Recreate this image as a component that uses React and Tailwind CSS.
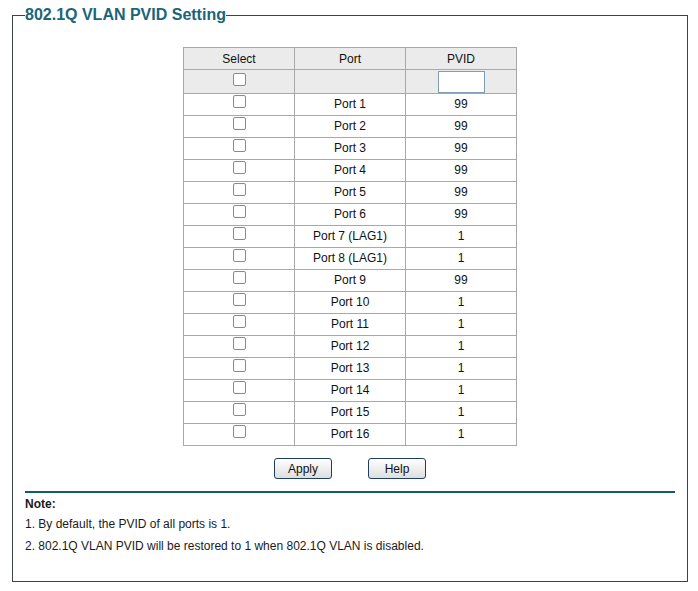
import React from "react";

const ports = [
  ["Port 1", "99"],
  ["Port 2", "99"],
  ["Port 3", "99"],
  ["Port 4", "99"],
  ["Port 5", "99"],
  ["Port 6", "99"],
  ["Port 7 (LAG1)", "1"],
  ["Port 8 (LAG1)", "1"],
  ["Port 9", "99"],
  ["Port 10", "1"],
  ["Port 11", "1"],
  ["Port 12", "1"],
  ["Port 13", "1"],
  ["Port 14", "1"],
  ["Port 15", "1"],
  ["Port 16", "1"],
];

function Box() {
  return (
    <span className="block w-[13px] h-[13px] border border-[#8a8a8a] rounded-[2px] bg-white"></span>
  );
}

export default function App() {
  return (
    <div
      className="pt-[6px] pl-[12px] w-[688px] bg-white text-[#111]"
      style={{ fontFamily: '"Liberation Sans", Arial, sans-serif' }}
    >
      <fieldset className="border border-[#3d4347] px-[12px] pb-[24px] w-[676px]">
        <legend className="text-[16px] font-bold leading-[18px] text-[#1b6479]">
          802.1Q VLAN PVID Setting
        </legend>
        <table className="mx-auto mt-[23px] border-collapse table-fixed w-[334px] text-[12px] leading-[14px]">
          <tbody>
            <tr className="h-[22px] bg-[#ebebeb]">
              <td className="border border-[#a8a8a8] text-center p-0">Select</td>
              <td className="border border-[#a8a8a8] text-center p-0">Port</td>
              <td className="border border-[#a8a8a8] text-center p-0">PVID</td>
            </tr>
            <tr className="h-[24px] bg-[#ebebeb]">
              <td className="border border-[#a8a8a8] p-0">
                <div className="flex justify-center pb-[4px]"><Box /></div>
              </td>
              <td className="border border-[#a8a8a8] p-0"></td>
              <td className="border border-[#a8a8a8] p-0">
                <div className="flex justify-center">
                  <div className="w-[47px] h-[22px] border border-[#7f9db9] bg-white"></div>
                </div>
              </td>
            </tr>
            {ports.map(([p, v]) => (
              <tr key={p} className="h-[22px] bg-white">
                <td className="border border-[#a8a8a8] p-0">
                  <div className="flex justify-center pb-[6px]"><Box /></div>
                </td>
                <td className="border border-[#a8a8a8] text-center p-0 pb-[1px]">{p}</td>
                <td className="border border-[#a8a8a8] text-center p-0 pb-[1px]">{v}</td>
              </tr>
            ))}
          </tbody>
        </table>
        <div className="flex justify-center gap-[36px] mt-[12px]">
          <button className="w-[58px] h-[21px] border border-[#1f3f5e] rounded-[3px] bg-gradient-to-b from-white to-[#dedede] text-[12px] leading-none">
            Apply
          </button>
          <button className="w-[58px] h-[21px] border border-[#1f3f5e] rounded-[3px] bg-gradient-to-b from-white to-[#dedede] text-[12px] leading-none">
            Help
          </button>
        </div>
        <div className="mt-[12px] border-t-2 border-[#125c69] text-[12px] text-[#1a1a1a]">
          <div className="font-bold leading-[19px] pt-[2px]">Note:</div>
          <div className="leading-[21px]">1. By default, the PVID of all ports is 1.</div>
          <div className="leading-[22px]">2. 802.1Q VLAN PVID will be restored to 1 when 802.1Q VLAN is disabled.</div>
        </div>
      </fieldset>
    </div>
  );
}
